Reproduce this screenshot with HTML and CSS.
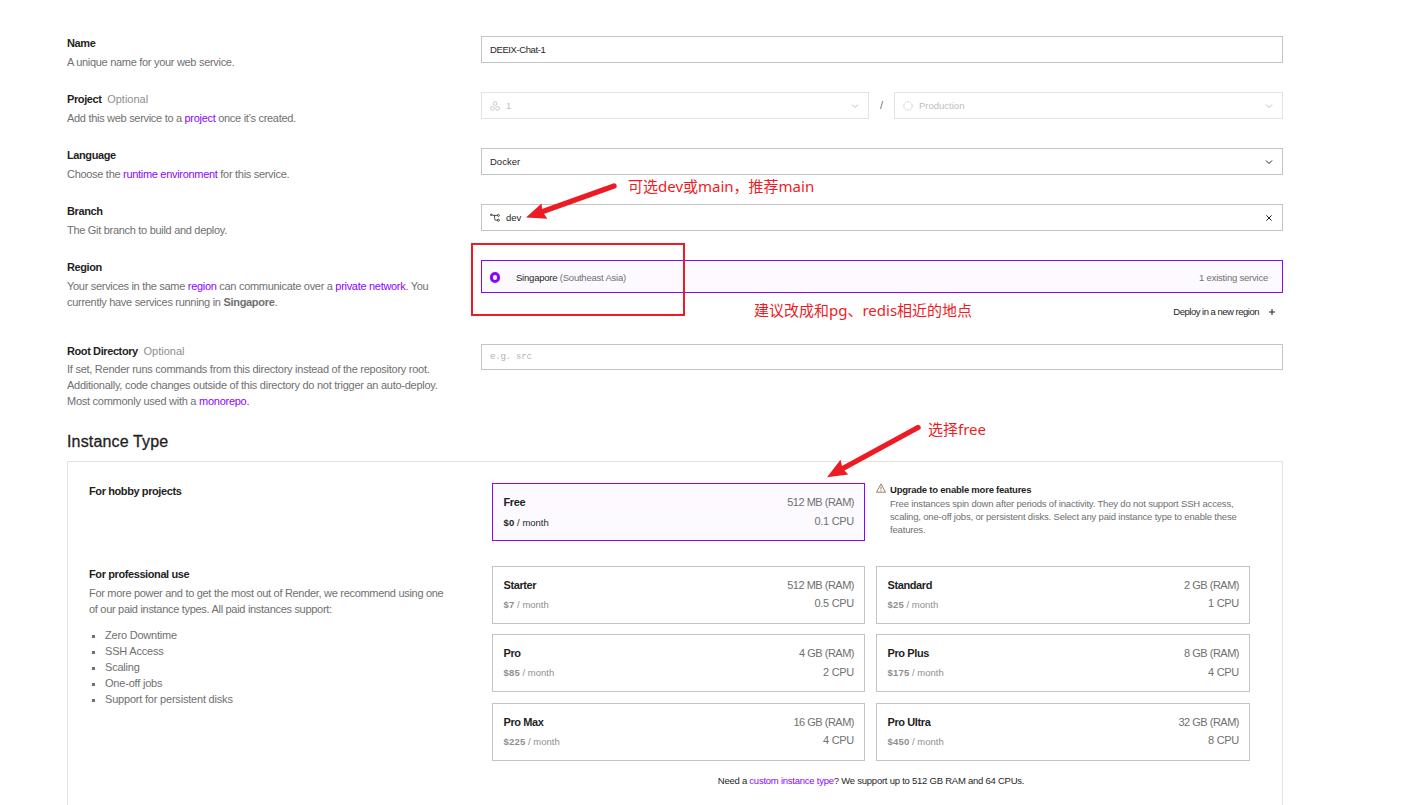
FILE: index.html
```html
<!DOCTYPE html>
<html lang="en">
<head>
    <meta charset="UTF-8">
    <meta name="viewport" content="width=device-width, initial-scale=1.0">
    <title>New Web Service</title>
    <link rel="stylesheet" href="styles.css">
</head>
<body>
    <form class="service-form">
        <!-- Service settings -->
        <div class="form-row">
            <div class="info">
                <h3>Name</h3>
                <p>A unique name for your web service.</p>
            </div>
            <div class="field name">DEEIX-Chat-1</div>
        </div>

        <div class="form-row">
            <div class="info">
                <h3>Project <span class="optional">Optional</span></h3>
                <p>Add this web service to a <a>project</a> once it’s created.</p>
            </div>
            <div class="pair">
                <div class="field disabled">
                    <svg class="icon" viewBox="0 0 10 10"><circle cx="5" cy="2.5" r="1.9"/><circle cx="2.4" cy="7.4" r="1.9"/><circle cx="7.6" cy="7.4" r="1.9"/></svg>
                    <span class="value">1</span>
                    <svg class="chevron" viewBox="0 0 8 8"><path d="M1 2.5l3 3 3-3"/></svg>
                </div>
                <span class="slash">/</span>
                <div class="field disabled">
                    <svg class="icon" viewBox="0 0 10 10"><circle cx="5" cy="5" r="4.2" stroke-dasharray="1.8 .84"/></svg>
                    <span class="value">Production</span>
                    <svg class="chevron" viewBox="0 0 8 8"><path d="M1 2.5l3 3 3-3"/></svg>
                </div>
            </div>
        </div>

        <div class="form-row">
            <div class="info">
                <h3>Language</h3>
                <p>Choose the <a>runtime environment</a> for this service.</p>
            </div>
            <div class="field">
                <span class="value">Docker</span>
                <svg class="chevron" viewBox="0 0 8 8"><path d="M1 2.5l3 3 3-3"/></svg>
            </div>
        </div>

        <div class="form-row">
            <div class="info">
                <h3>Branch</h3>
                <p>The Git branch to build and deploy.</p>
            </div>
            <div class="field">
                <svg class="icon" viewBox="0 0 10 10"><circle cx="1.2" cy="1.8" r=".8"/><circle cx="8.4" cy="2.4" r="1"/><circle cx="8.4" cy="7.2" r="1"/><path d="M2 1.800l1 .6h4.400M4.600 2.400v3.300q0 1.500 1.500 1.500h1.300"/></svg>
                <span class="value">dev</span>
                <svg class="chevron" viewBox="0 0 8 8"><path d="M1.400 1.400l5.200 5.200M6.600 1.400l-5.200 5.200"/></svg>
            </div>
        </div>

        <div class="form-row region">
            <div class="info">
                <h3>Region</h3>
                <p>Your services in the same <a>region</a> can communicate over a <a>private network</a>. You<br>currently have services running in <b>Singapore</b>.</p>
            </div>
            <div>
                <div class="region-option">
                    <span class="radio"></span>
                    <span class="value">Singapore <span class="muted">(Southeast Asia)</span></span>
                    <span class="muted">1 existing service</span>
                </div>
                <div class="new-region">
                    <span>Deploy in a new region</span>
                    <svg class="plus" viewBox="0 0 8 8"><path d="M4 1v6M1 4h6"/></svg>
                </div>
            </div>
        </div>

        <div class="form-row root">
            <div class="info">
                <h3>Root Directory <span class="optional">Optional</span></h3>
                <p>If set, Render runs commands from this directory instead of the repository root.<br>Additionally, code changes outside of this directory do not trigger an auto-deploy.<br>Most commonly used with a <a>monorepo.</a></p>
            </div>
            <div class="field placeholder">e.g. src</div>
        </div>

        <!-- Instance types -->
        <h2>Instance Type</h2>
        <div class="panel">
            <div class="plan-group hobby">
                <h3>For hobby projects</h3>
                <div class="plans">
                    <div class="plan selected">
                        <div><h4>Free</h4><p class="price"><b>$0</b> / month</p></div>
                        <div class="specs"><p>512 MB (RAM)</p><p>0.1 CPU</p></div>
                    </div>
                    <div class="notice">
                        <svg class="warning" viewBox="0 0 10 10"><path d="M5 .9L9.500 9.200H.5z"/><path d="M5 3.600v3M5 7.300v1"/></svg>
                        <div>
                            <h5>Upgrade to enable more features</h5>
                            <p>Free instances spin down after periods of inactivity. They do not support SSH access,<br>scaling, one-off jobs, or persistent disks. Select any paid instance type to enable these<br>features.</p>
                        </div>
                    </div>
                </div>
            </div>

            <div class="plan-group">
                <div class="info">
                    <h3>For professional use</h3>
                    <p>For more power and to get the most out of Render, we recommend using one<br>of our paid instance types. All paid instances support:</p>
                    <ul>
                        <li>Zero Downtime</li>
                        <li>SSH Access</li>
                        <li>Scaling</li>
                        <li>One-off jobs</li>
                        <li>Support for persistent disks</li>
                    </ul>
                </div>
                <div>
                    <div class="plans">
                        <div class="plan">
                            <div><h4>Starter</h4><p class="price"><b>$7</b> / month</p></div>
                            <div class="specs"><p>512 MB (RAM)</p><p>0.5 CPU</p></div>
                        </div>
                        <div class="plan">
                            <div><h4>Standard</h4><p class="price"><b>$25</b> / month</p></div>
                            <div class="specs"><p>2 GB (RAM)</p><p>1 CPU</p></div>
                        </div>
                        <div class="plan">
                            <div><h4>Pro</h4><p class="price"><b>$85</b> / month</p></div>
                            <div class="specs"><p>4 GB (RAM)</p><p>2 CPU</p></div>
                        </div>
                        <div class="plan">
                            <div><h4>Pro Plus</h4><p class="price"><b>$175</b> / month</p></div>
                            <div class="specs"><p>8 GB (RAM)</p><p>4 CPU</p></div>
                        </div>
                        <div class="plan">
                            <div><h4>Pro Max</h4><p class="price"><b>$225</b> / month</p></div>
                            <div class="specs"><p>16 GB (RAM)</p><p>4 CPU</p></div>
                        </div>
                        <div class="plan">
                            <div><h4>Pro Ultra</h4><p class="price"><b>$450</b> / month</p></div>
                            <div class="specs"><p>32 GB (RAM)</p><p>8 CPU</p></div>
                        </div>
                    </div>
                    <p class="custom">Need a <a>custom instance type</a>? We support up to 512 GB RAM and 64 CPUs.</p>
                </div>
            </div>
        </div>
    </form>

    <!-- Red notes over the form -->
    <div class="mark-box"></div>
    <svg class="arrows" viewBox="0 0 1428 805">
        <path class="shaft" d="M614 186L540 212.500"/>
        <path class="head" d="M526 217.500L541.500 203.500l1 8 4.800 7.200z"/>
        <path class="shaft" d="M918 427.500L840 470"/>
        <path class="head" d="M827 477.200L840.500 459.800l2 8.500 5.700 6.200z"/>
    </svg>
    <div class="note note-branch">可选dev或main，推荐main</div>
    <div class="note note-region">建议改成和pg、redis相近的地点</div>
    <div class="note note-free">选择free</div>
</body>
</html>
```
FILE: styles.css
```css
* {
    box-sizing: border-box;
}

body {
    margin: 0;
    position: relative;
    background: #fff;
    color: #1f1f1f;
    font-family: "Liberation Sans", Arial, sans-serif;
    font-size: 11px;
    line-height: 16px;
}

h2, h3, h4, h5, p, ul {
    margin: 0;
    padding: 0;
}

a {
    color: #8a05ff;
}

.service-form {
    width: 1216px;
    margin-left: 67px;
    padding-top: 36px;
}

.form-row {
    display: grid;
    grid-template-columns: 414px 802px;
    align-items: start;
    height: 56px;
}

.form-row.region {
    height: 84px;
}

.form-row.root {
    height: 85px;
}

h3 {
    font-size: 11px;
    line-height: 15px;
    letter-spacing: -0.4px;
}

.info p {
    margin-top: 3px;
    color: #707070;
    letter-spacing: -0.3px;
    white-space: nowrap;
}

.root .info p {
    margin-top: 2px;
    letter-spacing: -0.26px;
}

.optional {
    margin-left: 3px;
    color: #8f8f8f;
    font-weight: normal;
    letter-spacing: 0;
}

.field {
    display: flex;
    align-items: center;
    height: 27px;
    padding: 0 9px 0 8px;
    border: 1px solid #c4c4c4;
    font-size: 9.5px;
}

.field.name {
    letter-spacing: -0.4px;
}

.field .value {
    flex: 1;
}

.pair {
    display: grid;
    grid-template-columns: 388px 25px 389px;
    align-items: center;
}

.slash {
    padding-bottom: 1px;
    color: #707070;
    text-align: center;
}

.disabled {
    border-color: #e3e3e3;
    color: #c0c0c0;
}

.icon {
    width: 10px;
    height: 10px;
    margin-right: 6px;
}

.chevron, .plus {
    width: 8px;
    height: 8px;
}

svg {
    fill: none;
    stroke: currentColor;
    stroke-width: 1;
}

.icon {
    stroke-width: 0.8;
}

.placeholder {
    height: 26px;
    color: #b0b0b0;
    font-family: "Liberation Mono", monospace;
    font-size: 9px;
    letter-spacing: -0.2px;
}

.region-option {
    display: flex;
    align-items: center;
    height: 33px;
    padding: 2px 14px 0 8px;
    border: 1px solid #8a05ff;
    background: #fcfaff;
    font-size: 9.5px;
    letter-spacing: -0.22px;
}

.region-option .value {
    flex: 1;
}

.radio {
    width: 10px;
    height: 11px;
    margin-right: 16px;
    border: 3px solid #8a05ff;
    border-radius: 5px;
    background: #fff;
}

.muted {
    color: #707070;
}

.new-region {
    display: flex;
    justify-content: flex-end;
    align-items: center;
    gap: 9px;
    padding: 11px 7px 0 0;
    font-size: 9.5px;
    letter-spacing: -0.5px;
}

h2 {
    margin-bottom: 7px;
    padding-top: 1px;
    font-size: 16px;
    font-weight: normal;
    line-height: 24px;
    letter-spacing: 0.15px;
    -webkit-text-stroke: 0.3px;
}

.panel {
    height: 344px;
    padding: 21px 32px 0 21px;
    border: 1px solid #e3e3e3;
    border-bottom: none;
}

.panel h3 {
    line-height: 17px;
}

.panel .info p {
    margin-top: 2px;
}

.plan-group {
    display: grid;
    grid-template-columns: 403px 758px;
}

.plan-group.hobby {
    height: 82.5px;
}

.plans {
    display: grid;
    grid-template-columns: 373px 374px;
    grid-auto-rows: 58px;
    gap: 10.5px 11px;
}

.plan {
    display: flex;
    justify-content: space-between;
    padding: 10px 10px 0 10.5px;
    border: 1px solid #c4c4c4;
}

.plan.selected {
    border-color: #8a05ff;
    background: #fcfaff;
}

h4 {
    font-size: 11px;
    line-height: 16px;
    letter-spacing: -0.4px;
}

.price {
    margin-top: 4px;
    color: #8f8f8f;
    font-size: 9.5px;
}

.price b {
    letter-spacing: 0.2px;
}

.selected .price {
    margin-top: 5px;
    color: #1f1f1f;
}

.specs {
    color: #707070;
    letter-spacing: -0.5px;
    text-align: right;
}

.specs p + p {
    margin-top: 2.5px;
    letter-spacing: -0.3px;
}

.notice {
    display: flex;
    gap: 4px;
    color: #707070;
    font-size: 9.5px;
    line-height: 13px;
    letter-spacing: -0.18px;
    white-space: nowrap;
}

.warning {
    width: 10px;
    height: 10px;
    color: #8a5a3c;
    stroke-width: 0.8;
}

h5 {
    color: #1f1f1f;
    font-size: 9.5px;
    line-height: 14px;
    letter-spacing: -0.23px;
}

.info ul {
    margin-top: 10px;
    padding-left: 16px;
    color: #707070;
    letter-spacing: -0.2px;
    list-style: square;
}

.custom {
    margin-top: 12px;
    font-size: 9.5px;
    letter-spacing: -0.24px;
    text-align: center;
}

.mark-box {
    position: absolute;
    left: 471px;
    top: 243px;
    width: 214px;
    height: 73px;
    border: 2px solid #ed1c24;
}

.arrows {
    position: absolute;
    left: 0;
    top: 0;
    width: 1428px;
    height: 805px;
}

.shaft {
    stroke: #ed1c24;
    stroke-width: 5.4;
    stroke-linecap: round;
}

.head {
    fill: #ed1c24;
    stroke: none;
}

.note {
    position: absolute;
    color: #ed1c24;
    font-family: "Noto Sans", "Noto Sans CJK SC", sans-serif;
    font-size: 15px;
    line-height: 20px;
    white-space: nowrap;
}

.note-branch {
    left: 628px;
    top: 176px;
}

.note-region {
    left: 754px;
    top: 300px;
}

.note-free {
    left: 928px;
    top: 419px;
}
```
